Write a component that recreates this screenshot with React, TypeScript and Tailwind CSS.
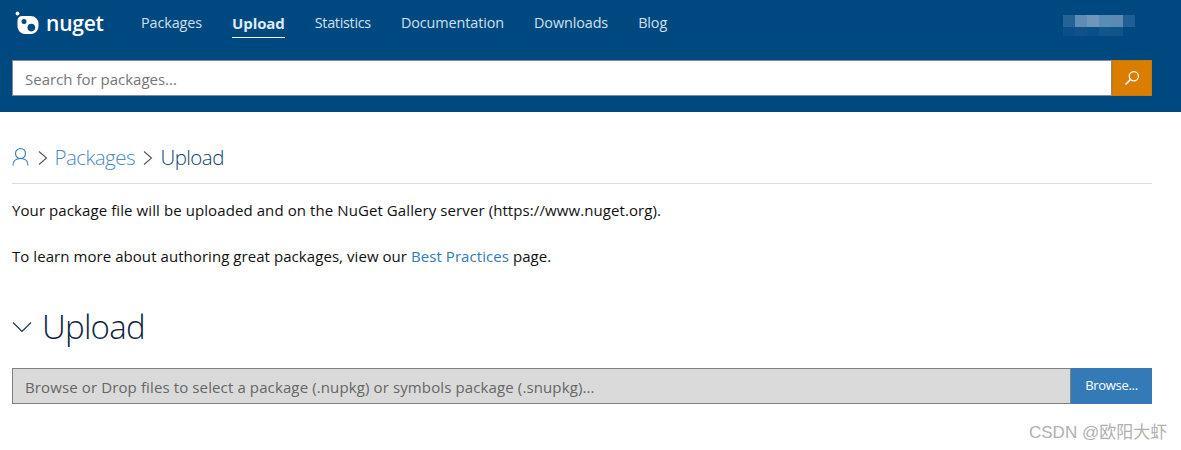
import React from "react";

const font = { fontFamily: '"Open Sans", "Noto Sans", sans-serif' };

function Logo() {
  return (
    <svg width="24" height="24" viewBox="0 0 24 24" className="shrink-0">
      <circle cx="2.5" cy="2.5" r="1.9" fill="#fff" />
      <path fillRule="evenodd" fill="#fff" d="M10 5h6a7.5 7.5 0 0 1 7.5 7.5v3a7.5 7.5 0 0 1-7.5 7.5h-6a7.5 7.5 0 0 1-7.5-7.5v-6A4.5 4.5 0 0 1 7 5z" />
      <circle cx="9" cy="10.500" r="2.5" fill="#004880" />
      <circle cx="16.3" cy="16.6" r="3.8" fill="#004880" />
    </svg>
  );
}

const blurTop = ["#256397", "#5f8cb3", "#7096bb", "#5a8db5", "#5c8ab2", "#1f5f94"];
const blurBottom = ["#0a4f87", "#0e5288", "#0a4f87", "#12568c", "#10548a", "#004880"];

function Chevron({ className }: { className: string }) {
  return (
    <svg width="12" height="16" viewBox="0 0 12 16" fill="none" stroke="#555" strokeWidth="1.1" className={className}>
      <path d="M2 1.500 9.500 8 2 14.500" />
    </svg>
  );
}

const navItem = "mt-[11px] h-[27px] text-[14.4px] leading-[24px] tracking-[-0.1px] text-[#cfe0ee]";

export default function App() {
  return (
    <div className="relative h-[450px] w-[1181px] overflow-hidden bg-white text-[#111]" style={font}>
      <header className="h-[112px] bg-[#004880] px-3">
        <div className="flex h-[60px] items-start">
          <div className="mt-[10px] flex w-[129px] shrink-0 items-center gap-[7px] pl-[3px]">
            <Logo />
            <span className="text-[21px] font-semibold leading-[26px] tracking-[-0.2px] text-white">nuget</span>
          </div>
          <nav className="flex gap-[30px]">
            <a className={navItem}>Packages</a>
            <a className="mt-[11px] h-[27px] border-b border-white text-[15px] font-bold leading-[24px] tracking-[-0.1px] text-[#deebf5]">Upload</a>
            <a className="mt-[11px] h-[27px] text-[14.4px] leading-[24px] tracking-[-0.3px] text-[#cfe0ee]">Statistics</a>
            <a className={navItem}>Documentation</a>
            <a className={navItem}>Downloads</a>
            <a className={navItem}>Blog</a>
          </nav>
          <div className="ml-auto mr-[34px] mt-[15px] flex flex-col">
            <div className="flex">
              {blurTop.map((c, i) => (
                <div key={i} className="h-[12px] w-[12px]" style={{ backgroundColor: c }} />
              ))}
            </div>
            <div className="flex">
              {blurBottom.map((c, i) => (
                <div key={i} className="h-[9px] w-[12px]" style={{ backgroundColor: c }} />
              ))}
            </div>
          </div>
        </div>
        <div className="flex h-[36px] w-[1140px]">
          <div className="flex flex-1 items-center border border-[#8a8a8a] bg-white pl-3 pt-[2px] text-[15px] leading-[30px] text-[#767676]">
            Search for packages...
          </div>
          <div className="flex w-[40px] shrink-0 items-center justify-center border border-[#c97800] bg-[#db7e00]">
            <svg width="18" height="18" viewBox="0 0 18 18" fill="none" stroke="#fff" strokeWidth="1.2">
              <circle cx="10.800" cy="7.200" r="4.600" />
              <path d="M7.500 10.500 2.500 15.500" strokeWidth="1.6" />
            </svg>
          </div>
        </div>
      </header>
      <main className="w-[1152px] pl-3">
        <div className="mt-[31px] flex h-[41px] items-start border-b border-[#dcdcdc]">
          <svg width="18" height="20" viewBox="0 0 18 20" fill="none" stroke="#337ab7" strokeWidth="1.1" className="mt-[4px]">
            <circle cx="8.500" cy="6.500" r="5" />
            <path d="M1 18.500c0-4.500 3-7 7.500-7s7.500 2.500 7.500 7" />
          </svg>
          <Chevron className="ml-[7px] mt-[7px]" />
          <span className="ml-[5.5px] text-[20.5px] font-light leading-[28px] tracking-[-0.55px] text-[#4a8ac0]">Packages</span>
          <Chevron className="ml-[7px] mt-[7px]" />
          <span className="ml-[6.5px] text-[20.5px] font-light leading-[28px] tracking-[-0.55px] text-[#0d4470]">Upload</span>
        </div>
        <p className="mt-[15px] text-[15px] leading-[22px] tracking-[0.09px] text-[#111]">
          Your package file will be uploaded and on the NuGet Gallery server (https://www.nuget.org).
        </p>
        <p className="mt-[24px] text-[15px] leading-[22px] tracking-[0.06px] text-[#111]">
          To learn more about authoring great packages, view our <a className="text-[#337ab7]">Best Practices</a> page.
        </p>
        <div className="mt-[37px] flex h-[46px] items-center">
          <svg width="20" height="12" viewBox="0 0 20 12" fill="none" stroke="#1c3550" strokeWidth="1.2">
            <path d="M1 1.500 10 10.500 19 1.500" />
          </svg>
          <span className="ml-[10px] text-[33px] font-light leading-[46px] tracking-[-0.75px] text-[#0d2540]">Upload</span>
        </div>
        <div className="mt-[18px] flex h-[36px]">
          <div className="flex flex-1 items-center border border-[#808080] bg-[#dadada] pl-3 pt-[2px] text-[15px] leading-[30px] tracking-[0.12px] text-[#666]">
            Browse or Drop files to select a package (.nupkg) or symbols package (.snupkg)...
          </div>
          <div className="flex w-[81px] shrink-0 items-center justify-center bg-[#337ab7] text-[13px] tracking-[-0.3px] text-white">
            Browse...
          </div>
        </div>
      </main>
      <div
        className="absolute left-[1029px] top-[421px] text-[17px] leading-[24px] text-[#b0b0b0]"
        style={{ fontFamily: '"Liberation Sans", "Noto Sans CJK SC", sans-serif' }}
      >
        CSDN @欧阳大虾
      </div>
    </div>
  );
}
